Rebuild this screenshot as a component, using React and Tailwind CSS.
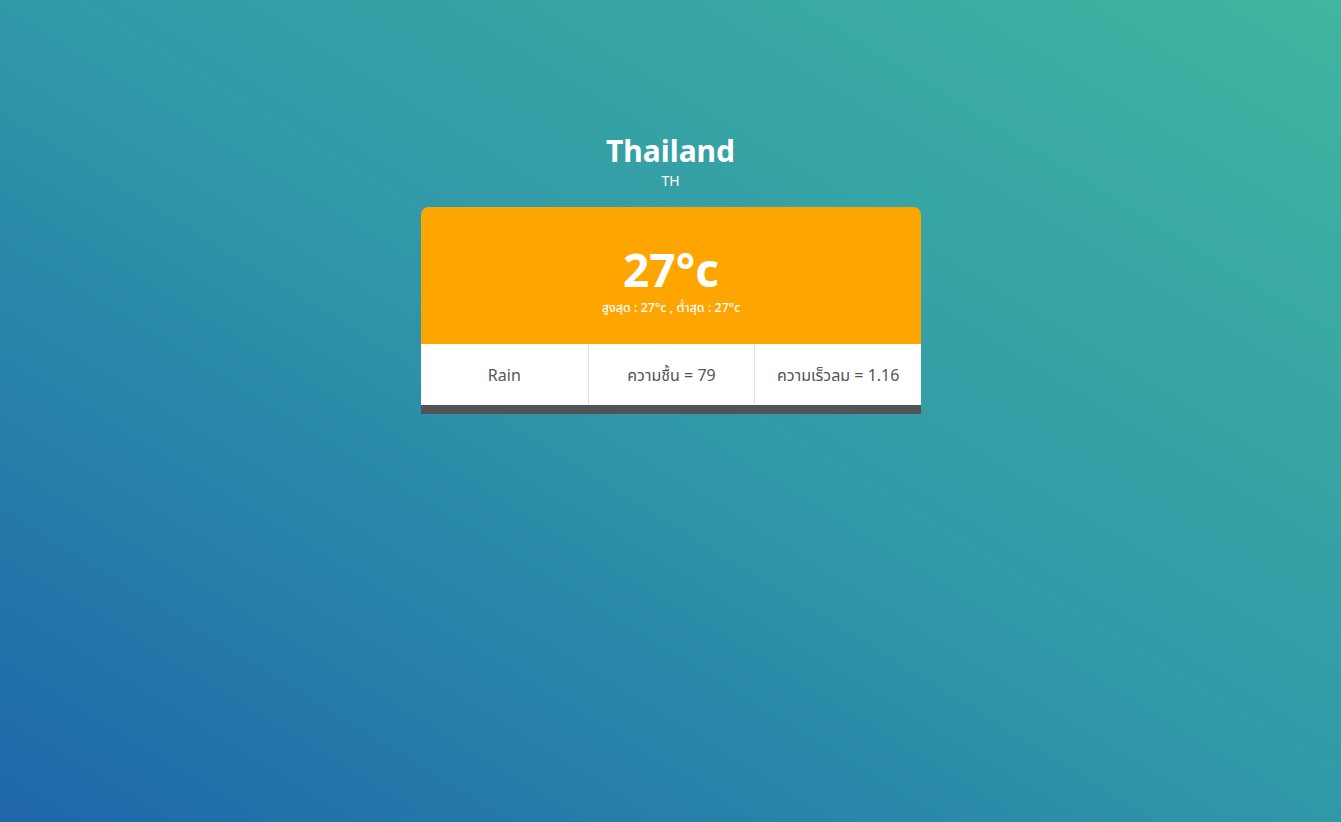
export default function App() {
  return (
    <div
      className="min-h-screen w-full bg-linear-to-tr from-[#1f66a9] via-[#3198a8] to-[#40b59f] flex flex-col items-center pt-[131px] text-white"
      style={{ fontFamily: '"Noto Sans", "Noto Sans Thai", "Open Sans", sans-serif' }}
    >
      <h1 className="text-[30px] font-bold leading-[40px]">Thailand</h1>
      <p className="text-[14px] leading-5">TH</p>

      <div className="w-[500px] mt-[16px] ml-[1px] overflow-hidden rounded-t-lg">
        <div className="bg-[#ffa500] h-[137px] flex flex-col items-center pt-[35px]">
          <div className="text-[46px] font-bold leading-[54px]">27°c</div>
          <div className="text-[12.5px] font-medium leading-4 mt-[4px]">สูงสุด : 27°c , ต่ำสุด : 27°c</div>
        </div>
        <div className="bg-white grid grid-cols-3 h-[61px] text-[#555] text-[16px]">
          <div className="flex items-center justify-center">Rain</div>
          <div className="flex items-center justify-center border-l border-[#e2e2e2]">ความชื้น = 79</div>
          <div className="flex items-center justify-center border-l border-[#e2e2e2]">ความเร็วลม = 1.16</div>
        </div>
        <div className="h-[9px] bg-[#525357]" />
      </div>
    </div>
  );
}
